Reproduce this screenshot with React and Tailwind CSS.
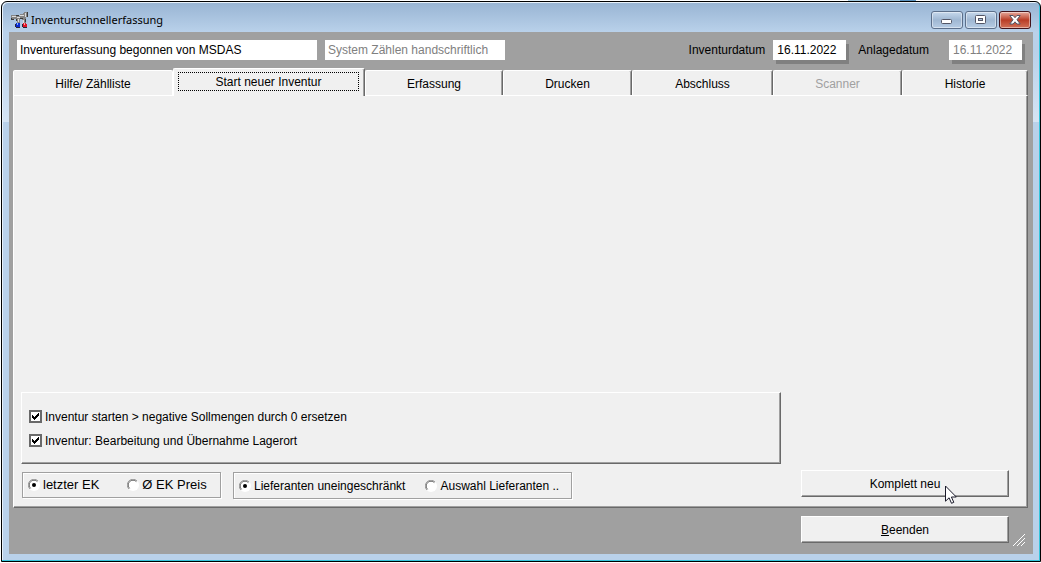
import { useState } from "react";

const TABS = [
  "Hilfe/ Zählliste",
  "Start neuer Inventur",
  "Erfassung",
  "Drucken",
  "Abschluss",
  "Scanner",
  "Historie",
];

const RAISED =
  "border border-t-white border-l-white border-r-[#696969] border-b-[#696969] shadow-[inset_-1px_-1px_0_#a0a0a0] bg-[#f0f0f0]";

const TAB =
  "rounded-t-[2px] border-t border-r border-l border-t-white border-l-white bg-[#f0f0f0]";

function AppIcon() {
  return (
    <svg width="18" height="16" viewBox="0 0 18 16" shapeRendering="crispEdges" aria-hidden="true">
      <path d="M0 3h5v1h4V2h3V1h1V0h3v5h-1v2h-1v1h1v3h-3V8h-1V6H9v5H6V8H5V7H3v1H1V6H0z" fill="#858585" />
      <path d="M1 4h4v1H1zM6 5h3v1H6zM9 3h4v1H9zM14 1h1v4h-1zM7 7h1v3H7zM12 8h1v3h-1z" fill="#dcdcdc" />
      <path d="M0 6h1v1h2v1H0zM5 7h1v2H5zM9 6h3v1H9zM16 0h1v5h-1zM14 7h1v3h-1zM5 3h3v1H5z" fill="#3a3a3a" />
      <path d="M5 11h4v4H5z" fill="#0a2ad0" />
      <path d="M12 11h3v1h1v3h-4z" fill="#e01428" />
      <path d="M6 11h1v2H6z" fill="#7fb2ff" />
      <path d="M13 11h1v2h-1z" fill="#ff9aa0" />
      <path d="M4 12h1v3H4zM5 15h4v1H5zM11 12h1v3h-1zM12 15h4v1h-4z" fill="#2a2438" />
    </svg>
  );
}

function CaptionButton({ label, close, children }) {
  return (
    <button
      type="button"
      aria-label={label}
      className={
        "flex h-[18px] w-8 items-center justify-center rounded-[3px] border shadow-[inset_0_0_0_1px_rgba(255,255,255,0.45)] " +
        (close
          ? "border-[#43131b] bg-linear-to-b from-[#e5a89c] via-[#b93c26] via-50% to-[#d27058]"
          : "border-[#5c6f8a] bg-linear-to-b from-[#c6d8ec] via-[#9fb7d2] via-50% to-[#b6cce4]")
      }
    >
      {children}
    </button>
  );
}

function Check({ label, defaultChecked }) {
  return (
    <label className="flex h-[23px] items-center gap-[3px]">
      <span className="grid">
        <input
          type="checkbox"
          defaultChecked={defaultChecked}
          className="peer col-start-1 row-start-1 size-[13px] appearance-none border-2 border-[#696969] bg-white"
        />
        <svg
          width="13"
          height="13"
          viewBox="0 0 13 13"
          className="pointer-events-none invisible col-start-1 row-start-1 peer-checked:visible"
          shapeRendering="crispEdges"
          aria-hidden="true"
        >
          <path d="M3 5h1v1h1v1h1v-1h1v-1h1v-1h1v-1h1v3h-1v1h-1v1h-1v1h-1v1h-1v-1h-1v-1h-1z" fill="#000" />
        </svg>
      </span>
      {label}
    </label>
  );
}

function Radio({ name, label, defaultChecked }) {
  return (
    <label className="flex items-center gap-[3px]">
      <span className="grid">
        <input
          type="radio"
          name={name}
          defaultChecked={defaultChecked}
          className="peer col-start-1 row-start-1 size-3 appearance-none rounded-full bg-white"
        />
        <svg
          width="12"
          height="12"
          viewBox="0 0 12 12"
          className="pointer-events-none col-start-1 row-start-1 [&>circle]:invisible peer-checked:[&>circle]:visible"
          aria-hidden="true"
        >
          <path d="M1.900 10.100A5.500 5.500 0 0 1 10.100 1.900" fill="none" stroke="#a0a0a0" />
          <path d="M2.600 9.400A4.700 4.700 0 0 1 9.400 2.600" fill="none" stroke="#696969" />
          <circle cx="6" cy="6" r="2" fill="#000" />
        </svg>
      </span>
      {label}
    </label>
  );
}

export default function App() {
  const [active, setActive] = useState(1);
  return (
    <div className="flex min-h-screen flex-col bg-white pb-px pl-px font-['Liberation_Sans',Arial,sans-serif] text-[12px] leading-4 text-black">
      <div className="flex h-px justify-end pr-[125px]">
        <span className="w-[52px] bg-[#a4cbe0]" />
        <span className="w-4 bg-[#5a92be]" />
      </div>
      <div className="flex flex-1 flex-col rounded-t-[6px] border border-black bg-[#b9d1ea] bg-[linear-gradient(#98b4d3,#b9d1ea_30px,#b9d1ea_50px,#d5e4f4_120px,#b9d1ea_120px)] px-[7px] pb-[7px] shadow-[inset_-1px_-1px_0_#35c5dc,inset_1px_1px_0_#e8f1fa]">
        <header className="flex h-[30px] items-center justify-between pt-[6px] pr-[2px] pl-[2px]">
          <h1 className="flex items-center gap-[2px] font-['Noto_Sans',sans-serif] text-[11px] leading-4 font-normal">
            <AppIcon />
            Inventurschnellerfassung
          </h1>
          <div className="flex gap-[2px]">
            <CaptionButton label="Minimieren">
              <svg width="12" height="6" viewBox="0 0 12 6" aria-hidden="true" className="mt-1">
                <rect x=".5" y=".5" width="10" height="4" rx="1" fill="#fff" stroke="#535666" />
              </svg>
            </CaptionButton>
            <CaptionButton label="Maximieren">
              <svg width="12" height="10" viewBox="0 0 12 10" aria-hidden="true">
                <rect x=".5" y=".5" width="10" height="8" rx="1" fill="#fff" stroke="#535666" />
                <rect x="3.500" y="3.500" width="4" height="2" fill="#a9c0da" stroke="#535666" />
              </svg>
            </CaptionButton>
            <CaptionButton label="Schließen" close>
              <svg width="12" height="10" viewBox="0 0 12 10" aria-hidden="true">
                <path
                  d="M.8 .5h3.300L6 2.700 7.900 .5h3.300L8 4.750 11.200 9H7.900L6 6.800 4.100 9H.8L4 4.750z"
                  fill="#fff"
                  stroke="#535666"
                />
              </svg>
            </CaptionButton>
          </div>
        </header>

        <main className="flex flex-1 flex-col bg-[#a0a0a0] pr-[5px] pl-1">
          <div className="flex items-start gap-2 pt-2 pr-[6px] pl-1">
            <input
              aria-label="Status"
              readOnly
              defaultValue="Inventurerfassung begonnen von MSDAS"
              className="h-5 w-[300px] bg-white px-[3px]"
            />
            <input
              aria-label="System"
              readOnly
              defaultValue="System Zählen handschriftlich"
              className="h-5 w-[180px] bg-white px-[3px] text-[#808080]"
            />
            <div className="ml-auto flex items-center">
              <label htmlFor="inventurdatum" className="pr-2">Inventurdatum</label>
              <input
                id="inventurdatum"
                defaultValue="16.11.2022"
                className="h-5 w-[73px] bg-white px-1 shadow-[3px_4px_0_#808080]"
              />
              <label htmlFor="anlagedatum" className="pr-5 pl-3">Anlagedatum</label>
              <input
                id="anlagedatum"
                readOnly
                defaultValue="16.11.2022"
                className="h-5 w-[73px] bg-white px-1 text-[#808080] shadow-[3px_4px_0_#808080]"
              />
            </div>
          </div>

          <div
            role="tablist"
            className="grid grid-cols-[160fr_192fr_138fr_129fr_141fr_129fr_126fr] items-end pt-2"
          >
            {TABS.map((t, i) => (
              <button
                key={t}
                type="button"
                role="tab"
                aria-selected={i === active}
                disabled={t === "Scanner"}
                onClick={() => setActive(i)}
                className={
                  TAB +
                  (i === active
                    ? " relative -mb-px h-7 border-r-[#696969] pt-[3px] pr-[5px] pb-[5px] pl-1 shadow-[inset_-1px_0_0_#a0a0a0]"
                    : i === active - 1
                      ? " h-[25px] border-r-white pt-[2px] disabled:text-[#a0a0a0]"
                      : " h-[25px] border-r-[#696969] pt-[2px] shadow-[inset_-1px_0_0_#a0a0a0] disabled:text-[#a0a0a0]")
                }
              >
                {i === active ? (
                  <span className="flex h-[19px] items-center justify-center border border-dotted border-black">{t}</span>
                ) : (
                  t
                )}
              </button>
            ))}
          </div>

          <section role="tabpanel" aria-label={TABS[active]} className={"flex flex-1 flex-col justify-end px-[7px] pb-2 " + RAISED}>
            <div className={"flex h-[72px] w-[760px] flex-col gap-px pt-3 pl-[7px] " + RAISED}>
              <Check label="Inventur starten > negative Sollmengen durch 0 ersetzen" defaultChecked />
              <Check label="Inventur: Bearbeitung und Übernahme Lagerort" defaultChecked />
            </div>
            <div className="flex items-start pt-[6px] pr-[11px] pl-px">
              <fieldset className="mt-[2px] flex h-[26px] w-[199px] items-center gap-7 border border-[#a0a0a0] pl-[5px] text-[13px] shadow-[inset_1px_1px_0_#fff,1px_1px_0_#fff]">
                <Radio name="preis" label="letzter EK" defaultChecked />
                <Radio name="preis" label="Ø EK Preis" />
              </fieldset>
              <fieldset className="mt-[2px] ml-3 flex h-[27px] w-[339px] items-center gap-5 border border-[#a0a0a0] pl-[5px] shadow-[inset_1px_1px_0_#fff,1px_1px_0_#fff]">
                <Radio name="lieferanten" label="Lieferanten uneingeschränkt" defaultChecked />
                <Radio name="lieferanten" label="Auswahl Lieferanten .." />
              </fieldset>
              <button type="button" className={"relative ml-auto h-[27px] w-[208px] " + RAISED}>
                Komplett neu
                <svg
                  width="12"
                  height="19"
                  viewBox="0 0 12 19"
                  aria-hidden="true"
                  className="pointer-events-none absolute top-[14px] left-[143px]"
                >
                  <path
                    d="M.5 1v15.200l3.600-3.400 2.400 5.500 2.300-1-2.400-5.300h4.900z"
                    fill="#fff"
                    stroke="#1a1a2a"
                  />
                </svg>
              </button>
            </div>
          </section>

          <footer className="flex h-[46px] items-start justify-end pt-2">
            <button type="button" className={"h-[27px] w-[208px] " + RAISED}>
              <span className="underline">B</span>eenden
            </button>
            <svg width="12" height="12" viewBox="0 0 12 12" aria-hidden="true" className="mt-[18px] mr-[3px] ml-1">
              <path d="M0 12L12 0M4 12l8-8M8 12l4-4" stroke="#fff" fill="none" />
            </svg>
          </footer>
        </main>
      </div>
    </div>
  );
}
